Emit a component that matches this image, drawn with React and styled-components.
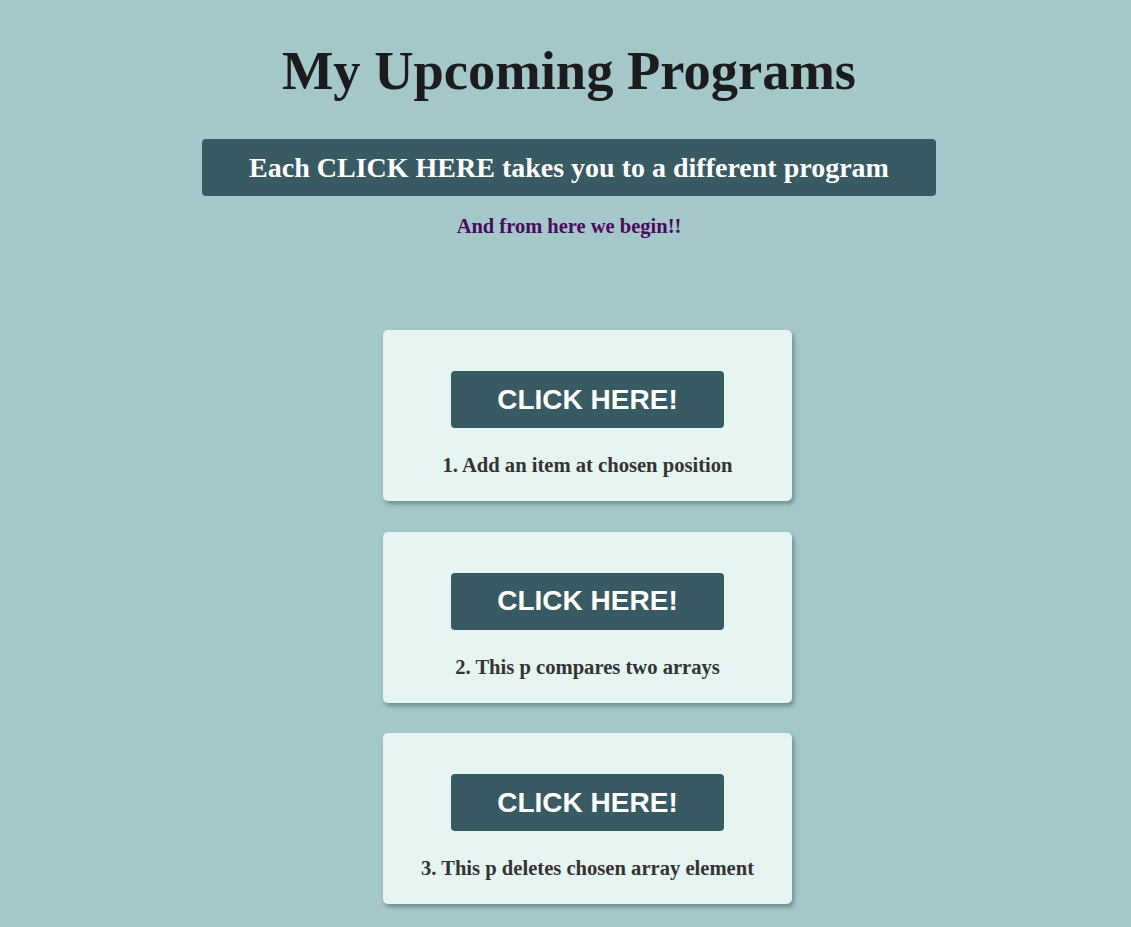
import styled, { createGlobalStyle } from "styled-components"

const GlobalStyle = createGlobalStyle`
  body {
    margin: 0;
    background: #a4c7ca;
    font-family: "Liberation Serif", "Times New Roman", serif;
  }
`

const Page = styled.div`
  min-height: 927px;
  display: flex;
  flex-direction: column;
  align-items: center;
`

const Header = styled.header`
  align-self: stretch;
  padding-left: 7px;
  display: flex;
  flex-direction: column;
  align-items: center;
`

const Title = styled.h1`
  margin: 39px 0 0;
  font-size: 54.5px;
  line-height: 64px;
  font-weight: 700;
  color: #1c1c1c;
`

const Banner = styled.div`
  margin-top: 36px;
  width: 734px;
  height: 57px;
  display: flex;
  align-items: center;
  justify-content: center;
  background: #385a63;
  border-radius: 4px;
  color: #fff;
  font-size: 28px;
  font-weight: 700;
`

const Subtitle = styled.p`
  margin: 18px 0 0;
  font-size: 20.5px;
  line-height: 24px;
  font-weight: 700;
  color: #4a0b5e;
`

const CardList = styled.div`
  align-self: stretch;
  padding-left: 44px;
  margin-top: 92px;
  display: flex;
  flex-direction: column;
  align-items: center;
  gap: 30.5px;
`

const Card = styled.div`
  width: 409px;
  box-sizing: border-box;
  padding: 41px 0 24px;
  display: flex;
  flex-direction: column;
  align-items: center;
  background: #e6f5f2;
  border-radius: 5px;
  box-shadow: 2px 3px 4px rgba(40, 70, 75, 0.45);
`

const Button = styled.button`
  width: 273px;
  height: 57px;
  border: none;
  border-radius: 4px;
  background: #385a63;
  color: #fff;
  font-family: "Liberation Sans", Arial, sans-serif;
  font-size: 28px;
  font-weight: 700;
  cursor: pointer;
`

const Label = styled.p`
  margin: 26px 0 0;
  font-size: 20.6px;
  line-height: 23px;
  font-weight: 700;
  color: #333;
`

const programs = [
  "1. Add an item at chosen position",
  "2. This p compares two arrays",
  "3. This p deletes chosen array element",
]

const App = () => {
  return (
    <Page>
      <GlobalStyle />
      <Header>
        <Title>My Upcoming Programs</Title>
        <Banner>Each CLICK HERE takes you to a different program</Banner>
        <Subtitle>And from here we begin!!</Subtitle>
      </Header>
      <CardList>
        {programs.map((p) => (
          <Card key={p}>
            <Button>CLICK HERE!</Button>
            <Label>{p}</Label>
          </Card>
        ))}
      </CardList>
    </Page>
  )
}

export default App
